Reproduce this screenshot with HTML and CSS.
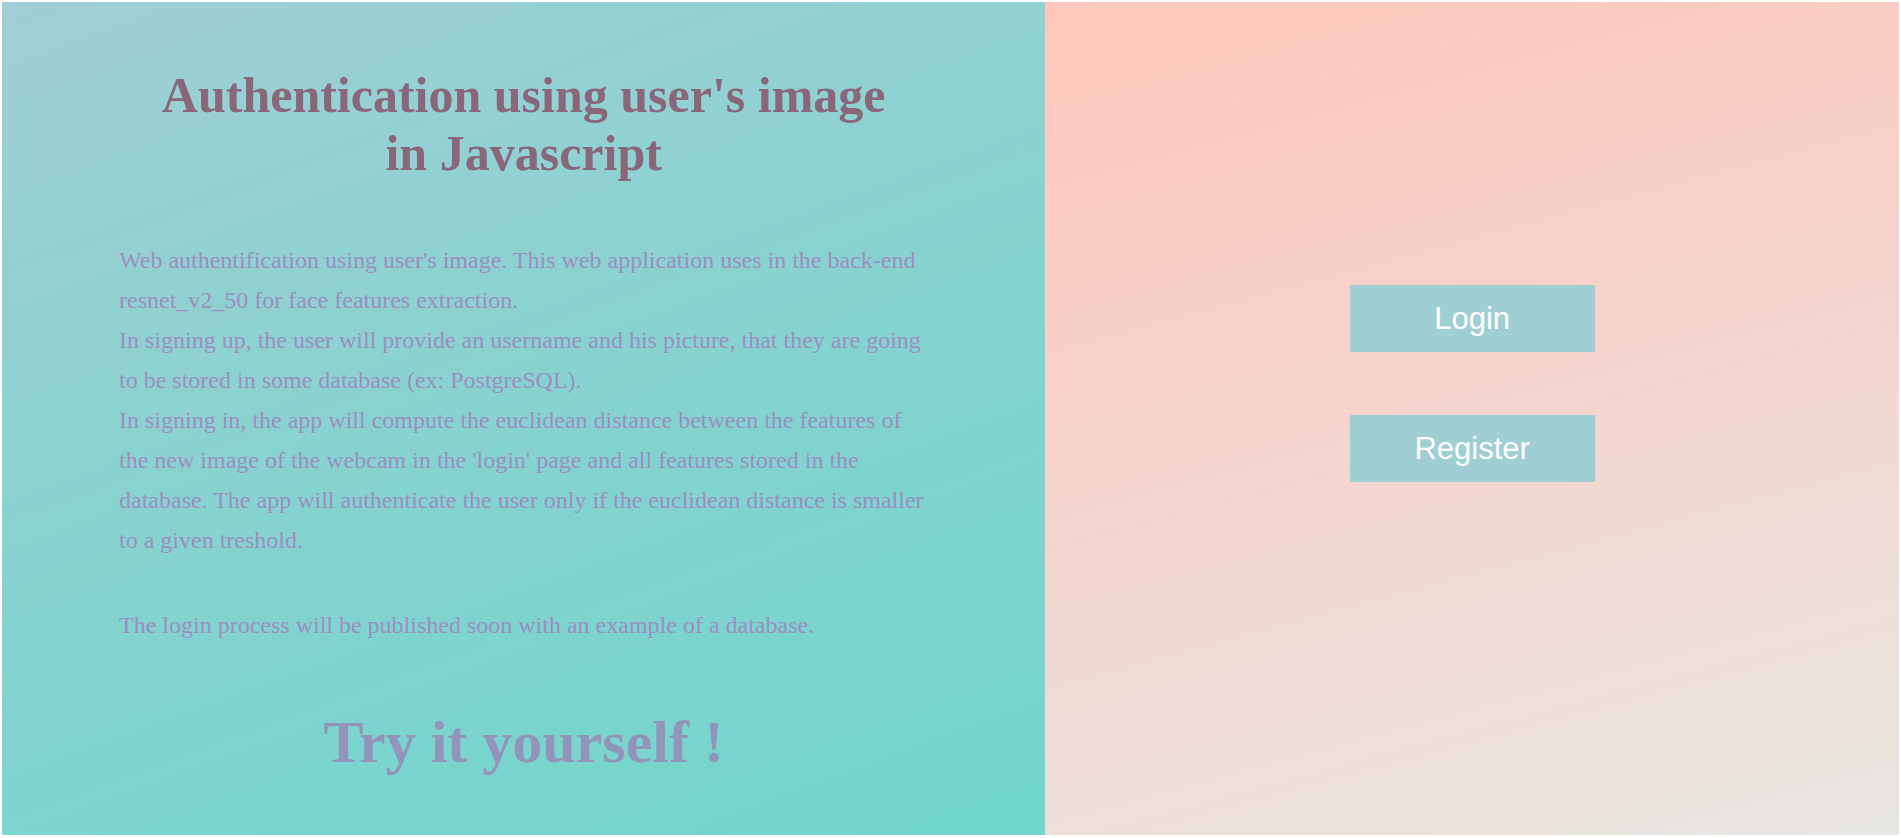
FILE: index.html
```html
<!DOCTYPE html>
<html>
<head>
<meta charset="utf-8">
<title>Authentication using user's image</title>
<link rel="stylesheet" href="styles.css">
</head>
<body>
<div class="page">
  <section class="left">
    <h1 class="title">Authentication using user's image<br>in Javascript</h1>
    <p class="desc">Web authentification using user's image. This web application uses in the back-end resnet_v2_50 for face features extraction.<br>In signing up, the user will provide an username and his picture, that they are going to be stored in some database (ex: PostgreSQL).<br>In signing in, the app will compute the euclidean distance between the features of the new image of the webcam in the 'login' page and all features stored in the database. The app will authenticate the user only if the euclidean distance is smaller to a given treshold.</p>
    <p class="desc">The login process will be published soon with an example of a database.</p>
    <h2 class="try">Try it yourself !</h2>
  </section>
  <section class="right">
    <div class="buttons">
      <a class="btn" href="#">Login</a>
      <a class="btn" href="#">Register</a>
    </div>
  </section>
</div>
</body>
</html>
```
FILE: styles.css
```css
html, body {
  margin: 0;
  padding: 0;
  background: #ffffff;
}
.page {
  display: flex;
  margin: 2px 2px 3px 2px;
  height: 833px;
}
.left {
  width: 55%;
  box-sizing: border-box;
  padding: 64px 117px 0 117px;
  background: linear-gradient(160deg, #a0cfd4 0%, #86d3d0 50%, #71d6cd 100%);
  font-family: "Liberation Serif", "Times New Roman", serif;
}
.title {
  margin: 0;
  text-align: center;
  font-size: 50px;
  line-height: 58px;
  font-weight: bold;
  color: #8a6679;
}
.desc {
  margin: 58px 0 0 0;
  font-size: 24px;
  line-height: 40px;
  color: #9a8fc0;
}
.desc + .desc {
  margin-top: 45px;
}
.try {
  margin: 62px 0 0 0;
  text-align: center;
  font-size: 60px;
  line-height: 70px;
  font-weight: bold;
  color: #9294b9;
}
.right {
  flex: 1;
  display: flex;
  justify-content: center;
  background: linear-gradient(165deg, #ffc7bc 0%, #f4d5cf 50%, #e7e6e1 100%);
}
.buttons {
  display: flex;
  flex-direction: column;
  gap: 63px;
  padding-top: 283px;
}
.btn {
  display: flex;
  align-items: center;
  justify-content: center;
  width: 245px;
  height: 67px;
  background: #9fcfd2;
  color: #ffffff;
  text-decoration: none;
  font-family: "Liberation Sans", Arial, sans-serif;
  font-size: 31px;
}
```
